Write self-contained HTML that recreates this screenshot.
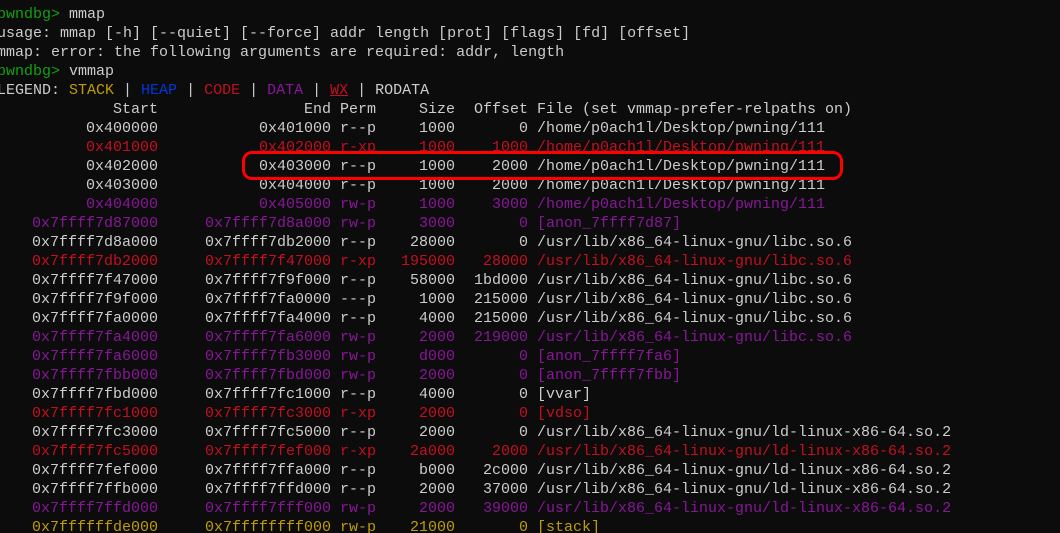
<!DOCTYPE html>
<html><head><meta charset="utf-8"><style>
html,body{margin:0;padding:0;background:#0c0c0c;width:1060px;height:533px;overflow:hidden}
body{position:relative;font-family:"Liberation Mono",monospace;font-size:15px;color:#cccccc}
.l{position:absolute;left:-3px;height:19px;line-height:19px;white-space:pre}
.r{position:absolute;height:19px;line-height:19px;white-space:pre;width:400px}
.a{left:-242px;text-align:right}
.b{left:-69px;text-align:right}
.p{left:340px}
.s{left:55px;text-align:right}
.o{left:128px;text-align:right}
.f{left:537px}
.g{color:#13a10e}.y{color:#c19c00}.bl{color:#0037da}.rd{color:#c50f1f}.pu{color:#881798}
.box{position:absolute;left:242px;top:151px;width:595px;height:23px;border:3px solid #ff0000;border-radius:10px}
</style></head><body>
<div class="l" style="top:5px"><span class="g">pwndbg&gt;</span> mmap</div>
<div class="l" style="top:24px">usage: mmap [-h] [--quiet] [--force] addr length [prot] [flags] [fd] [offset]</div>
<div class="l" style="top:43px">mmap: error: the following arguments are required: addr, length</div>
<div class="l" style="top:62px"><span class="g">pwndbg&gt;</span> vmmap</div>
<div class="l" style="top:81px">LEGEND: <span class="y">STACK</span> | <span class="bl">HEAP</span> | <span class="rd">CODE</span> | <span class="pu">DATA</span> | <span class="rd" style="text-decoration:underline">WX</span> | RODATA</div>
<div id="t"></div>
<div class="box"></div>
<script>
var rows=[
["","Start","End","Perm","Size","Offset","File (set vmmap-prefer-relpaths on)"],
["","0x400000","0x401000","r--p","1000","0","/home/p0ach1l/Desktop/pwning/111"],
["rd","0x401000","0x402000","r-xp","1000","1000","/home/p0ach1l/Desktop/pwning/111"],
["","0x402000","0x403000","r--p","1000","2000","/home/p0ach1l/Desktop/pwning/111"],
["","0x403000","0x404000","r--p","1000","2000","/home/p0ach1l/Desktop/pwning/111"],
["pu","0x404000","0x405000","rw-p","1000","3000","/home/p0ach1l/Desktop/pwning/111"],
["pu","0x7ffff7d87000","0x7ffff7d8a000","rw-p","3000","0","[anon_7ffff7d87]"],
["","0x7ffff7d8a000","0x7ffff7db2000","r--p","28000","0","/usr/lib/x86_64-linux-gnu/libc.so.6"],
["rd","0x7ffff7db2000","0x7ffff7f47000","r-xp","195000","28000","/usr/lib/x86_64-linux-gnu/libc.so.6"],
["","0x7ffff7f47000","0x7ffff7f9f000","r--p","58000","1bd000","/usr/lib/x86_64-linux-gnu/libc.so.6"],
["","0x7ffff7f9f000","0x7ffff7fa0000","---p","1000","215000","/usr/lib/x86_64-linux-gnu/libc.so.6"],
["","0x7ffff7fa0000","0x7ffff7fa4000","r--p","4000","215000","/usr/lib/x86_64-linux-gnu/libc.so.6"],
["pu","0x7ffff7fa4000","0x7ffff7fa6000","rw-p","2000","219000","/usr/lib/x86_64-linux-gnu/libc.so.6"],
["pu","0x7ffff7fa6000","0x7ffff7fb3000","rw-p","d000","0","[anon_7ffff7fa6]"],
["pu","0x7ffff7fbb000","0x7ffff7fbd000","rw-p","2000","0","[anon_7ffff7fbb]"],
["","0x7ffff7fbd000","0x7ffff7fc1000","r--p","4000","0","[vvar]"],
["rd","0x7ffff7fc1000","0x7ffff7fc3000","r-xp","2000","0","[vdso]"],
["","0x7ffff7fc3000","0x7ffff7fc5000","r--p","2000","0","/usr/lib/x86_64-linux-gnu/ld-linux-x86-64.so.2"],
["rd","0x7ffff7fc5000","0x7ffff7fef000","r-xp","2a000","2000","/usr/lib/x86_64-linux-gnu/ld-linux-x86-64.so.2"],
["","0x7ffff7fef000","0x7ffff7ffa000","r--p","b000","2c000","/usr/lib/x86_64-linux-gnu/ld-linux-x86-64.so.2"],
["","0x7ffff7ffb000","0x7ffff7ffd000","r--p","2000","37000","/usr/lib/x86_64-linux-gnu/ld-linux-x86-64.so.2"],
["pu","0x7ffff7ffd000","0x7ffff7fff000","rw-p","2000","39000","/usr/lib/x86_64-linux-gnu/ld-linux-x86-64.so.2"],
["y","0x7ffffffde000","0x7ffffffff000","rw-p","21000","0","[stack]"]];
var h="";
rows.forEach(function(r,i){var t=100+i*19;var c=r[0]?' '+r[0]:'';
var cl=["a","b","p","s","o","f"];
for(var k=0;k<6;k++){h+='<div class="r '+cl[k]+c+'" style="top:'+t+'px">'+r[k+1]+'</div>';}});
document.getElementById("t").innerHTML=h;
</script>
</body></html>
